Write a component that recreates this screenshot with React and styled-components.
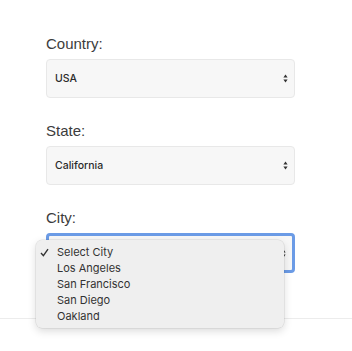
import React from "react";
import styled, { createGlobalStyle } from "styled-components";

const GlobalStyle = createGlobalStyle`
  body {
    margin: 0;
    background: #ffffff;
    font-family: "Liberation Sans", Arial, sans-serif;
  }
`;

const Page = styled.div`
  width: 352px;
  height: 351px;
  overflow: hidden;
`;

const Form = styled.div`
  padding: 35px 0 45px 46px;
  border-bottom: 1px solid #ececec;
`;

const Field = styled.div`
  width: 249px;
  margin-bottom: 24px;
  position: relative;
  &:last-child {
    margin-bottom: 0;
  }
`;

const Label = styled.div`
  font-size: 15px;
  line-height: 17px;
  color: #3c3c3c;
  margin-bottom: 7px;
`;

const SelectBox = styled.div`
  box-sizing: border-box;
  height: ${p => (p.$focused ? "40px" : "39px")};
  display: flex;
  align-items: center;
  justify-content: space-between;
  padding: 0 6px 0 8px;
  background: #f7f7f7;
  border: ${p => (p.$focused ? "3px solid #6b9be6" : "1px solid #e8e8e8")};
  border-radius: 4px;
  font-family: Inter, "Liberation Sans", sans-serif;
  font-size: 10.5px;
  font-weight: 500;
  color: #2a2a2a;
`;

const Value = styled.span`
  visibility: ${p => (p.$hidden ? "hidden" : "visible")};
`;

const Arrows = () => (
  <svg width="5" height="9" viewBox="0 0 5 9">
    <path d="M2.5 0.5 L4.6 3.6 L0.4 3.6 Z" fill="#333" />
    <path d="M2.5 8.5 L4.6 5.4 L0.4 5.4 Z" fill="#333" />
  </svg>
);

const Menu = styled.div`
  position: absolute;
  left: -10px;
  top: 31px;
  width: 248px;
  box-sizing: border-box;
  padding: 4px 0;
  background: #efefef;
  border-radius: 6px;
  box-shadow: 0 3px 8px rgba(0, 0, 0, 0.15), 0 0 0 0.5px rgba(0, 0, 0, 0.1);
`;

const Option = styled.div`
  display: flex;
  align-items: center;
  height: 16px;
  padding-left: 4px;
  font-family: Inter, "Liberation Sans", sans-serif;
  font-size: 11px;
  color: #333;
`;

const Check = styled.span`
  width: 17px;
  display: flex;
  align-items: center;
`;

const Select = ({ value, focused }) => (
  <SelectBox $focused={focused}>
    <Value $hidden={focused}>{value}</Value>
    <Arrows />
  </SelectBox>
);

const cities = ["Select City", "Los Angeles", "San Francisco", "San Diego", "Oakland"];

export default function App() {
  return (
    <Page>
      <GlobalStyle />
      <Form>
        <Field>
          <Label>Country:</Label>
          <Select value="USA" />
        </Field>
        <Field>
          <Label>State:</Label>
          <Select value="California" />
        </Field>
        <Field>
          <Label>City:</Label>
          <Select value="Select City" focused />
          <Menu>
            {cities.map((c, i) => (
              <Option key={c}>
                <Check>
                  {i === 0 && (
                    <svg width="9" height="9" viewBox="0 0 9 9">
                      <path d="M1 5 L3.4 7.6 L8 1.2" fill="none" stroke="#333" strokeWidth="1.4" />
                    </svg>
                  )}
                </Check>
                {c}
              </Option>
            ))}
          </Menu>
        </Field>
      </Form>
    </Page>
  );
}
